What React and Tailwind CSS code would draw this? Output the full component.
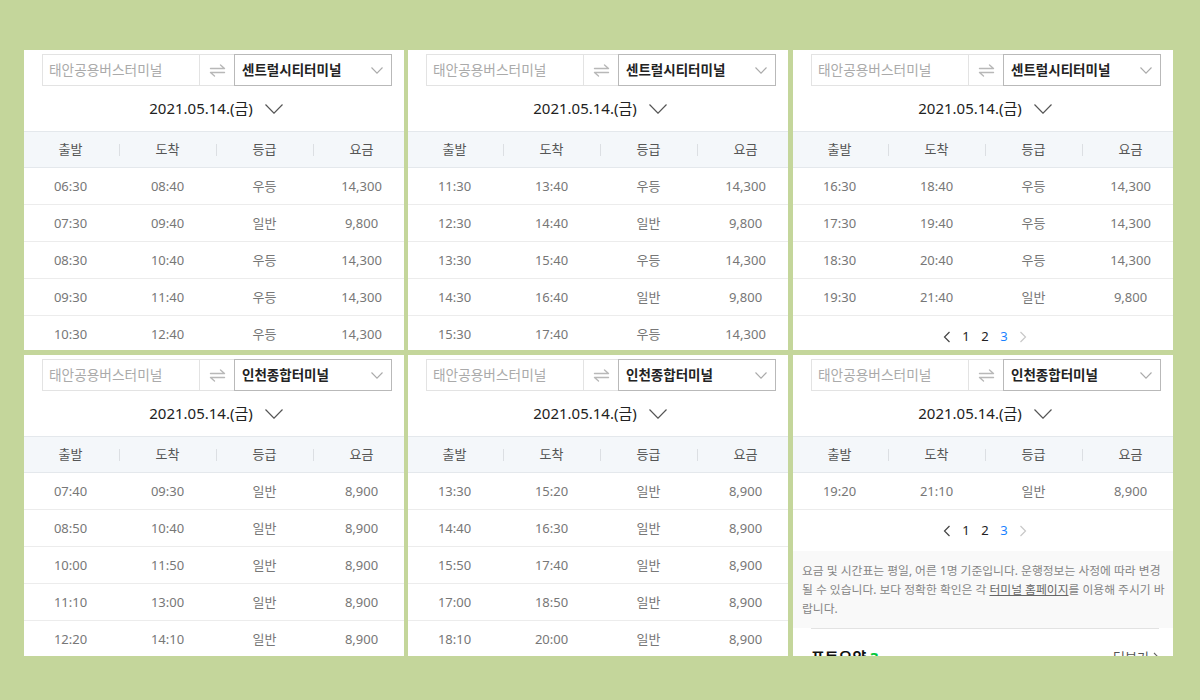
import React from "react";

const FONT = "font-['Noto_Sans','Noto_Sans_CJK_KR',sans-serif]";

function SwapIcon() {
  return (
    <svg width="17" height="13" viewBox="0 0 17 13" fill="none" stroke="#b8b8b8" strokeWidth="1.4" strokeLinecap="round" strokeLinejoin="round">
      <path d="M1.5 4.5H15.5L11.5 1" />
      <path d="M15.5 8.5H1.5L5.5 12" />
    </svg>
  );
}

function Chevron({ w = 12, h = 7, color = "#aaa", sw = 1.1 }) {
  return (
    <svg width={w} height={h} viewBox={`0 0 ${w} ${h}`} fill="none" stroke={color} strokeWidth={sw}>
      <path d={`M0.5 0.5L${w / 2} ${h - 0.8}L${w - 0.5} 0.5`} />
    </svg>
  );
}

function Pagination() {
  return (
    <div className="h-[41px] pt-[1px] flex items-center justify-center gap-[11px] text-[13px]">
      <svg width="8" height="12" viewBox="0 0 8 12" fill="none" stroke="#444" strokeWidth="1.2">
        <path d="M6.5 1L1.5 6L6.5 11" />
      </svg>
      <span className="text-[#222] w-[8px] text-center">1</span>
      <span className="text-[#222] w-[8px] text-center">2</span>
      <span className="text-[#1a82ff] w-[8px] text-center">3</span>
      <svg width="8" height="12" viewBox="0 0 8 12" fill="none" stroke="#c8c8c8" strokeWidth="1.2">
        <path d="M1.5 1L6.5 6L1.5 11" />
      </svg>
    </div>
  );
}

function Notice() {
  return (
    <>
      <div className="bg-[#f9f9f9] pl-[11px] pr-[6px] py-[10px] text-[11.8px] leading-[19px] text-[#858585] whitespace-nowrap">
        <div>요금 및 시간표는 평일, 어른 1명 기준입니다. 운행정보는 사정에 따라 변경</div>
        <div>
          될 수 있습니다. 보다 정확한 확인은 각{" "}
          <span className="underline text-[#666]">터미널 홈페이지</span>를 이용해 주시기 바
        </div>
        <div>랍니다.</div>
      </div>
      <div className="mx-[20px] border-t border-[#e3e3e3]" />
      <div className="flex items-center justify-between px-[20px] pt-[17px]">
        <div className="text-[15px] font-bold text-[#111]">
          포토요약 <span className="text-[#00c73c]">3</span>
        </div>
        <div className="flex items-center gap-[4px] text-[13px] text-[#555]">
          더보기
          <svg width="6" height="10" viewBox="0 0 6 10" fill="none" stroke="#666" strokeWidth="1.1">
            <path d="M1 1L5 5L1 9" />
          </svg>
        </div>
      </div>
    </>
  );
}

function Panel({ dest, rows, pagination, notice, height }) {
  return (
    <div className={`w-[380px] ${height} bg-white overflow-hidden ${FONT}`}>
      <div className="w-[388px] -ml-[2px] pt-[4px]">
        <div className="ml-[20px] w-[350px] h-[32px] flex">
          <div className="w-[157px] h-full border border-r-0 border-[#e3e3e3] pl-[6px] flex items-center text-[13.7px] text-[#aaa]">
            태안공용버스터미널
          </div>
          <div className="w-[35px] h-full border border-r-0 border-[#e3e3e3] flex items-center justify-center">
            <SwapIcon />
          </div>
          <div className="flex-1 h-full border border-[#b9b9b9] pl-[7px] pr-[8px] flex items-center justify-between">
            <span className="font-bold text-[13.5px] text-[#222]">{dest}</span>
            <Chevron />
          </div>
        </div>
        <div className="h-[45px] flex items-center justify-center gap-[12px] text-[15px] text-[#222]">
          <span>2021.05.14.(금)</span>
          <Chevron w={18} h={10} color="#555" sw={1.2} />
        </div>
        <div className="grid grid-cols-4 h-[37px] bg-[#f4f7fa] border-y border-[#e4e8ec] text-[13px] text-[#555]">
          {["출발", "도착", "등급", "요금"].map((t, i) => (
            <div
              key={t}
              className={
                i === 0
                  ? "flex items-center justify-center"
                  : "relative flex items-center justify-center before:absolute before:left-0 before:top-[12px] before:h-[12px] before:w-px before:bg-[#dcdfe3]"
              }
            >
              {t}
            </div>
          ))}
        </div>
        {rows.map((r, i) => (
          <div key={i} className="grid grid-cols-4 h-[37px] pt-[1px] border-b border-[#ececec] text-[13px] text-[#777]">
            {r.map((c, j) => (
              <div key={j} className="flex items-center justify-center">
                {c}
              </div>
            ))}
          </div>
        ))}
        {pagination && <Pagination />}
        {notice && <Notice />}
      </div>
    </div>
  );
}

const C = "센트럴시티터미널";
const I = "인천종합터미널";

const p1 = [
  ["06:30", "08:40", "우등", "14,300"],
  ["07:30", "09:40", "일반", "9,800"],
  ["08:30", "10:40", "우등", "14,300"],
  ["09:30", "11:40", "우등", "14,300"],
  ["10:30", "12:40", "우등", "14,300"],
];
const p2 = [
  ["11:30", "13:40", "우등", "14,300"],
  ["12:30", "14:40", "일반", "9,800"],
  ["13:30", "15:40", "우등", "14,300"],
  ["14:30", "16:40", "일반", "9,800"],
  ["15:30", "17:40", "우등", "14,300"],
];
const p3 = [
  ["16:30", "18:40", "우등", "14,300"],
  ["17:30", "19:40", "우등", "14,300"],
  ["18:30", "20:40", "우등", "14,300"],
  ["19:30", "21:40", "일반", "9,800"],
];
const q1 = [
  ["07:40", "09:30", "일반", "8,900"],
  ["08:50", "10:40", "일반", "8,900"],
  ["10:00", "11:50", "일반", "8,900"],
  ["11:10", "13:00", "일반", "8,900"],
  ["12:20", "14:10", "일반", "8,900"],
];
const q2 = [
  ["13:30", "15:20", "일반", "8,900"],
  ["14:40", "16:30", "일반", "8,900"],
  ["15:50", "17:40", "일반", "8,900"],
  ["17:00", "18:50", "일반", "8,900"],
  ["18:10", "20:00", "일반", "8,900"],
];
const q3 = [["19:20", "21:10", "일반", "8,900"]];

export default function App() {
  return (
    <div className="w-[1200px] h-[700px] bg-[#c4d69b] pt-[50px] pl-[24px] overflow-hidden">
      <div className="flex">
        <Panel dest={C} rows={p1} height="h-[300px]" />
        <div className="ml-[4px]">
          <Panel dest={C} rows={p2} height="h-[300px]" />
        </div>
        <div className="ml-[5px]">
          <Panel dest={C} rows={p3} pagination height="h-[300px]" />
        </div>
      </div>
      <div className="flex mt-[5px]">
        <Panel dest={I} rows={q1} height="h-[301px]" />
        <div className="ml-[4px]">
          <Panel dest={I} rows={q2} height="h-[301px]" />
        </div>
        <div className="ml-[5px]">
          <Panel dest={I} rows={q3} pagination notice height="h-[301px]" />
        </div>
      </div>
    </div>
  );
}
